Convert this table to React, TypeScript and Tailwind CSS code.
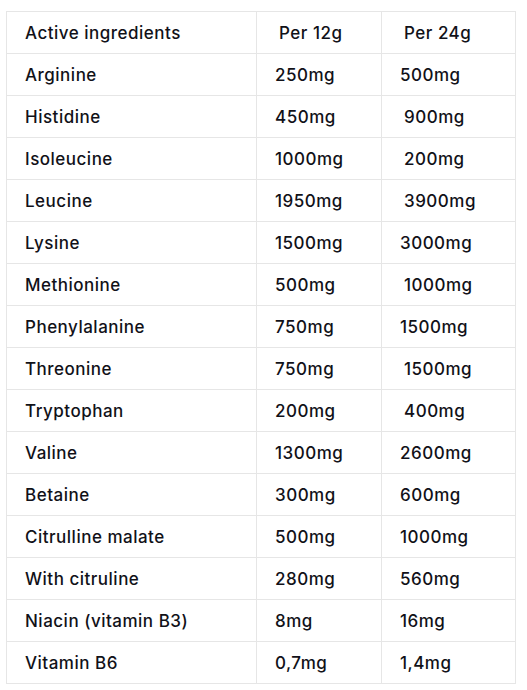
import React from "react";

type Row = { name: string; a: string; b: string; aPad?: boolean; bPad?: boolean };

const rows: Row[] = [
  { name: "Arginine", a: "250mg", b: "500mg" },
  { name: "Histidine", a: "450mg", b: "900mg", bPad: true },
  { name: "Isoleucine", a: "1000mg", b: "200mg", bPad: true },
  { name: "Leucine", a: "1950mg", b: "3900mg", bPad: true },
  { name: "Lysine", a: "1500mg", b: "3000mg" },
  { name: "Methionine", a: "500mg", b: "1000mg", bPad: true },
  { name: "Phenylalanine", a: "750mg", b: "1500mg" },
  { name: "Threonine", a: "750mg", b: "1500mg", bPad: true },
  { name: "Tryptophan", a: "200mg", b: "400mg", bPad: true },
  { name: "Valine", a: "1300mg", b: "2600mg" },
  { name: "Betaine", a: "300mg", b: "600mg" },
  { name: "Citrulline malate", a: "500mg", b: "1000mg" },
  { name: "With citruline", a: "280mg", b: "560mg" },
  { name: "Niacin (vitamin B3)", a: "8mg", b: "16mg" },
  { name: "Vitamin B6", a: "0,7mg", b: "1,4mg" },
];

export default function App() {
  return (
    <div
      className="w-[527px] h-[690px] bg-white pt-[11px] pl-[6px]"
      style={{ fontFamily: "Inter, 'Noto Sans', sans-serif" }}
    >
      <table className="border-collapse text-[17px] font-medium text-[#111118] tracking-[0.5px]">
        <colgroup>
          <col className="w-[250px]" />
          <col className="w-[125px]" />
          <col className="w-[134px]" />
        </colgroup>
        <tbody>
          <tr className="h-[42px]">
            <td className="border border-[#e6e6e6] p-0 pt-[3px] pl-[18px]">Active ingredients</td>
            <td className="border border-[#e6e6e6] p-0 pt-[3px] pl-[22px]">Per 12g</td>
            <td className="border border-[#e6e6e6] p-0 pt-[3px] pl-[22px]">Per 24g</td>
          </tr>
          {rows.map((r) => (
            <tr key={r.name} className="h-[42px]">
              <td className="border border-[#e6e6e6] p-0 pt-[3px] pl-[18px]">{r.name}</td>
              <td className={`border border-[#e6e6e6] p-0 pt-[3px] ${r.aPad ? "pl-[22px]" : "pl-[18px]"}`}>{r.a}</td>
              <td className={`border border-[#e6e6e6] p-0 pt-[3px] ${r.bPad ? "pl-[22px]" : "pl-[18px]"}`}>{r.b}</td>
            </tr>
          ))}
        </tbody>
      </table>
    </div>
  );
}
